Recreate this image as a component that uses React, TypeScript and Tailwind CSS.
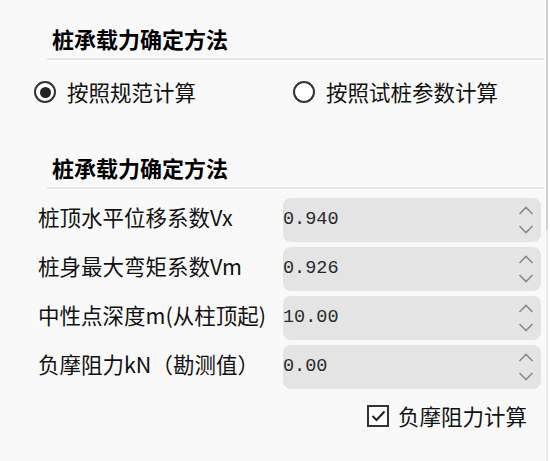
import React from "react";

const cjk = { fontFamily: '"Noto Sans CJK SC", "Noto Sans", sans-serif' };
const mono = { fontFamily: '"Liberation Mono", "DejaVu Sans Mono", monospace' };

function Radio({ checked, label }: { checked?: boolean; label: string }) {
  return (
    <div className="flex items-center gap-[11px]">
      <span className="w-[22px] h-[22px] rounded-full border-[2px] border-[#333] bg-white flex items-center justify-center">
        {checked && <span className="w-[11px] h-[11px] rounded-full bg-[#222]" />}
      </span>
      <span className="text-[21.5px] leading-[28px] text-[#111]">{label}</span>
    </div>
  );
}

function SpinRow({ label, value }: { label: string; value: string }) {
  return (
    <div className="flex items-center h-[44px] pl-[38px]">
      <div className="w-[245px] text-[21.5px] leading-[28px] text-[#111] pb-[6px] whitespace-nowrap">{label}</div>
      <div className="w-[258px] h-full rounded-[8px] bg-[#e4e4e4] flex items-center justify-between pr-[7px]">
        <span className="text-[18.5px] text-[#2a2a2a] leading-none" style={mono}>
          {value}
        </span>
        <div className="flex flex-col items-center gap-[10px]">
          <svg width="16" height="9" viewBox="0 0 16 9">
            <path d="M1.5 8 L8 1.5 L14.5 8" fill="none" stroke="#8a8a8a" strokeWidth="1.6" />
          </svg>
          <svg width="16" height="9" viewBox="0 0 16 9">
            <path d="M1.5 1 L8 7.5 L14.5 1" fill="none" stroke="#8a8a8a" strokeWidth="1.6" />
          </svg>
        </div>
      </div>
    </div>
  );
}

export default function App() {
  return (
    <div className="w-[550px] h-[461px] flex bg-white overflow-hidden" style={cjk}>
      <div className="w-[546px] bg-[#f9f9f9] flex flex-col">
        {/* section 1 */}
        <div className="mt-[24px] ml-[52px] text-[22px] leading-[28px] font-bold text-black">桩承载力确定方法</div>
        <div className="mt-[6px] ml-[47px] mr-[2px] h-[2px] bg-[#e6e6e6]" />
        <div className="mt-[18px] flex">
          <div className="ml-[34px] w-[259px]">
            <Radio checked label="按照规范计算" />
          </div>
          <Radio label="按照试桩参数计算" />
        </div>

        {/* section 2 */}
        <div className="mt-[47px] ml-[52px] text-[22px] leading-[28px] font-bold text-black">桩承载力确定方法</div>
        <div className="mt-[6px] ml-[47px] mr-[2px] h-[2px] bg-[#e6e6e6]" />
        <div className="mt-[9px] flex flex-col gap-[5px]">
          <SpinRow label="桩顶水平位移系数Vx" value="0.940" />
          <SpinRow label="桩身最大弯矩系数Vm" value="0.926" />
          <SpinRow label="中性点深度m(从柱顶起)" value="10.00" />
          <SpinRow label="负摩阻力kN（勘测值）" value="0.00" />
        </div>
        <div className="mt-[13px] ml-[367px] flex items-center gap-[9px]">
          <span className="w-[22px] h-[22px] border-[2px] border-[#333] bg-white flex items-center justify-center">
            <svg width="15" height="12" viewBox="0 0 15 12">
              <path d="M1.5 6 L5.5 10 L13.5 1.5" fill="none" stroke="#222" strokeWidth="2" />
            </svg>
          </span>
          <span className="text-[21.5px] leading-[28px] text-[#111]">负摩阻力计算</span>
        </div>
      </div>
      <div className="w-[2px] flex flex-col">
        <div className="h-[230px] bg-[#cfcfcf]" />
        <div className="flex-1 bg-[#ebebeb]" />
      </div>
      <div className="w-[2px] bg-white" />
    </div>
  );
}
